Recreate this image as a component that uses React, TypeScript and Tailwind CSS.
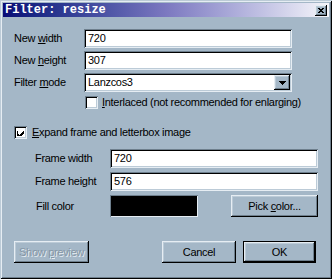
import React from "react";

const raised =
  "shadow-[inset_-1px_-1px_#000,inset_1px_1px_#e6edf3,inset_-2px_-2px_#6e7f8d,inset_2px_2px_#bccbd7]";
const sunken =
  "shadow-[inset_1px_1px_#6e7f8d,inset_-1px_-1px_#e6edf3,inset_2px_2px_#000,inset_-2px_-2px_#bccbd7]";

function Field({ value, w }: { value: string; w: string }) {
  return (
    <div className={`${w} h-[19px] bg-white ${sunken} pl-[4px] flex items-center text-black`}>
      <span>{value}</span>
    </div>
  );
}

function Check({ checked }: { checked?: boolean }) {
  return (
    <div className={`w-[13px] h-[13px] bg-white ${sunken} flex items-center justify-center shrink-0`}>
      {checked && (
        <svg width="7" height="7" viewBox="0 0 7 7" shapeRendering="crispEdges">
          <path d="M0 2h1v3h1v1h1v-1h1v-1h1v-1h1v-1h1v3h-1v1h-1v1h-1v1h-1v1h-1v-1h-1v-1h-1z" fill="#000" />
        </svg>
      )}
    </div>
  );
}

function Button({
  children,
  w,
  def,
  disabled,
}: {
  children: React.ReactNode;
  w: string;
  def?: boolean;
  disabled?: boolean;
}) {
  const inner = (
    <div
      className={`${def ? "w-full h-full" : `${w} h-[22px]`} ${raised} flex items-center justify-center ${
        disabled ? "text-[#8596a5] [text-shadow:1px_1px_0_#e6edf3]" : "text-black"
      }`}
    >
      <span>{children}</span>
    </div>
  );
  if (def) {
    return <div className={`${w} h-[22px] border border-black`}>{inner}</div>;
  }
  return inner;
}

export default function App() {
  return (
    <div
      className="w-[332px] h-[279px] bg-[#a4b7c7] p-[3px] flex flex-col shadow-[inset_1px_1px_#bccbd7,inset_-1px_-1px_#000,inset_2px_2px_#e6edf3,inset_-2px_-2px_#6e7f8d] text-[11px] leading-none tracking-[-0.3px]"
      style={{ fontFamily: '"Liberation Sans", Arial, sans-serif' }}
    >
      {/* Title bar */}
      <div className="h-[14px] flex items-center justify-between bg-gradient-to-r from-[#0a0a76] via-[#7c78c0] to-[#f6f6fa] pl-[2px] pr-[2px]">
        <span
          className="text-white font-bold text-[12px] tracking-[0px]"
          style={{ fontFamily: '"Liberation Mono", "DejaVu Sans Mono", monospace' }}
        >
          Filter: resize
        </span>
        <div className={`w-[12px] h-[11px] bg-[#a4b7c7] ${raised} flex items-center justify-center`}>
          <svg width="6" height="5" viewBox="0 0 6 5" shapeRendering="crispEdges">
            <path d="M0 0h2v1h2v-1h2v1h-1v1h-1v1h1v1h1v1h-2v-1h-2v1h-2v-1h1v-1h1v-1h-1v-1h-1z" fill="#000" />
          </svg>
        </div>
      </div>

      {/* Size rows */}
      <div className="mt-[12px] flex flex-col gap-[3px] pl-[11px]">
        <div className="flex items-center h-[19px]">
          <span className="w-[70px]">
            New <u>w</u>idth
          </span>
          <Field value="720" w="w-[208px]" />
        </div>
        <div className="flex items-center h-[19px]">
          <span className="w-[70px]">
            New <u>h</u>eight
          </span>
          <Field value="307" w="w-[208px]" />
        </div>
        <div className="flex items-center h-[19px]">
          <span className="w-[70px]">
            Filter <u>m</u>ode
          </span>
          <div className={`w-[208px] h-[19px] bg-white ${sunken} pl-[4px] pr-[2px] py-[2px] flex items-center justify-between`}>
            <span>Lanzcos3</span>
            <div className={`w-[16px] h-full bg-[#a4b7c7] ${raised} flex items-center justify-center`}>
              <svg width="7" height="4" viewBox="0 0 7 4" shapeRendering="crispEdges">
                <path d="M0 0h7v1h-1v1h-1v1h-1v1h-1v-1h-1v-1h-1v-1h-1z" fill="#000" />
              </svg>
            </div>
          </div>
        </div>
      </div>

      <div className="mt-[4px] ml-[82px] flex items-center gap-[4px] h-[13px]">
        <Check />
        <span>
          <u>I</u>nterlaced (not recommended for enlarging)
        </span>
      </div>

      <div className="mt-[17px] ml-[11px] flex items-center gap-[5px] h-[13px]">
        <Check checked />
        <span>
          <u>E</u>xpand frame and letterbox image
        </span>
      </div>

      <div className="mt-[10px] flex flex-col gap-[4px] pl-[32px]">
        <div className="flex items-center h-[19px]">
          <span className="w-[75px]">Frame width</span>
          <Field value="720" w="w-[208px]" />
        </div>
        <div className="flex items-center h-[19px]">
          <span className="w-[75px]">Frame height</span>
          <Field value="576" w="w-[208px]" />
        </div>
      </div>

      <div className="mt-[4px] flex items-center h-[22px] pl-[33px]">
        <span className="w-[74px]">Fill color</span>
        <div className={`w-[88px] h-[22px] bg-black shadow-[inset_1px_1px_#6e7f8d,inset_-1px_-1px_#e6edf3]`} />
        <div className="ml-[33px]">
          <Button w="w-[87px]">
            Pick <u>c</u>olor...
          </Button>
        </div>
      </div>

      <div className="mt-[24px] flex items-center h-[22px] pl-[11px]">
        <Button w="w-[75px]" disabled>
          Show <u>p</u>review
        </Button>
        <div className="ml-[73px]">
          <Button w="w-[74px]">Cancel</Button>
        </div>
        <div className="ml-[7px]">
          <Button w="w-[73px]" def>
            OK
          </Button>
        </div>
      </div>
    </div>
  );
}
